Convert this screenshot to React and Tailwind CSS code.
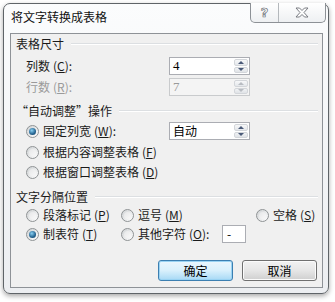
import React from "react";

const FONT = { fontFamily: '"Noto Sans CJK SC", "Noto Sans", sans-serif' };

function Key({ k }) {
  return (
    <span className="ml-[3px]">
      (<u>{k}</u>)
    </span>
  );
}

function GroupTitle({ children }) {
  return (
    <div className="flex items-center h-[20px] pl-[5px] pr-[4px]">
      <span className="text-[12px] leading-[16px] text-[#1a1a1a]">{children}</span>
      <div className="flex-1 ml-[7px] border-t border-t-[#dcdfe2] border-b border-b-white" />
    </div>
  );
}

function Radio({ checked }) {
  return (
    <span className="w-[13px] h-[13px] shrink-0 rounded-full border border-[#8f9395] bg-gradient-to-br from-[#cfd2d4] to-white flex items-center justify-center">
      {checked ? (
        <span className="w-[7px] h-[7px] rounded-full bg-[radial-gradient(circle_at_40%_35%,#8ad0f2,#23628f_60%,#173f5f)]" />
      ) : (
        <span className="w-[7px] h-[7px] rounded-full bg-gradient-to-br from-[#e6e7e8] to-[#f9f9f9]" />
      )}
    </span>
  );
}

function Arrow({ up, disabled }) {
  const c = disabled ? "border-b-[#b8bcc2]" : "border-b-[#4a5a78]";
  const d = disabled ? "border-t-[#b8bcc2]" : "border-t-[#4a5a78]";
  return up ? (
    <span className={`w-0 h-0 border-x-[3px] border-x-transparent border-b-[3px] ${c}`} />
  ) : (
    <span className={`w-0 h-0 border-x-[3px] border-x-transparent border-t-[3px] ${d}`} />
  );
}

function Spin({ value, disabled, serif }) {
  return (
    <div
      className={`w-[81px] h-[18px] flex border ${
        disabled ? "border-[#c9cbcd] bg-[#f4f4f4]" : "border-[#abadb3] bg-white"
      }`}
    >
      <span
        className={`flex-1 pl-[3px] text-[12px] leading-[16px] ${
          disabled ? "text-[#9a9a9a]" : "text-black"
        }`}
        style={serif ? { fontFamily: '"Liberation Serif", serif', fontSize: 13 } : undefined}
      >
        {value}
      </span>
      <div className="w-[14px] my-px mr-px flex flex-col gap-px">
        <div className="flex-1 rounded-[2px] border border-[#d3d6da] bg-gradient-to-b from-[#f7f8f9] to-[#e4e7eb] flex items-center justify-center">
          <Arrow up disabled={disabled} />
        </div>
        <div className="flex-1 rounded-[2px] border border-[#d3d6da] bg-gradient-to-b from-[#f0f2f4] to-[#e0e3e7] flex items-center justify-center">
          <Arrow disabled={disabled} />
        </div>
      </div>
    </div>
  );
}

function RadioLabel({ checked, children }) {
  return (
    <div className="flex items-center">
      <Radio checked={checked} />
      <span className="ml-[4px] text-[12px] leading-[16px] text-[#1a1a1a] whitespace-nowrap">
        {children}
      </span>
    </div>
  );
}

export default function App() {
  return (
    <div className="w-[335px] h-[302px] bg-white overflow-hidden relative" style={FONT}>
      <div className="ml-[3px] mt-[3px] w-[326px] h-[291px] rounded-[7px] border border-[#5f6468] bg-gradient-to-b from-[#fbfcfd] to-[#eceef1] shadow-[0_2px_5px_rgba(0,0,0,0.35)] flex flex-col pl-[6px] pr-[5px] pb-[5px]">
        {/* title bar */}
        <div className="h-[29px] flex items-start shrink-0">
          <span className="pl-px mt-[5px] text-[12px] leading-[16px] text-[#111]">
            将文字转换成表格
          </span>
          <div className="ml-auto -mt-px -mr-[3px] h-[20px] flex border border-t-0 border-[#8d9196] rounded-b-[5px] bg-gradient-to-b from-white to-[#eef0f2] overflow-hidden">
            <div className="w-[28px] flex items-center justify-center border-r border-r-[#b4b8bc]">
              <span
                className="text-[13px] leading-[16px] font-bold text-white [-webkit-text-stroke:0.7px_#6d7177]"
                style={{ fontFamily: '"DejaVu Sans", sans-serif' }}
              >
                ?
              </span>
            </div>
            <div className="w-[46px] flex items-center justify-center">
              <svg width="14" height="11" viewBox="0 0 14 11">
                <path
                  d="M1 1 H4.5 L7 3.5 L9.5 1 H13 L9 5.5 L13 10 H9.5 L7 7.5 L4.5 10 H1 L5 5.5 Z"
                  fill="#fdfdfd"
                  stroke="#6d7177"
                  strokeWidth="0.9"
                  strokeLinejoin="round"
                />
              </svg>
            </div>
          </div>
        </div>

        {/* client */}
        <div className="flex-1 border border-[#8e9297] bg-[#f0f0f0] flex flex-col">
          <GroupTitle>表格尺寸</GroupTitle>

          <div className="mt-[3px] h-[18px] flex items-center pl-[15px]">
            <span className="w-[143px] text-[12px] leading-[16px] text-[#1a1a1a]">
              列数<Key k="C" />:
            </span>
            <Spin value="4" serif />
          </div>
          <div className="mt-[3px] h-[18px] flex items-center pl-[15px]">
            <span className="w-[143px] text-[12px] leading-[16px] text-[#9a9a9a]">
              行数<Key k="R" />:
            </span>
            <Spin value="7" disabled serif />
          </div>

          <div className="mt-[5px]">
            <GroupTitle>“自动调整”操作</GroupTitle>
          </div>
          <div className="mt-px h-[18px] flex items-center pl-[15px]">
            <div className="w-[143px]">
              <RadioLabel checked>
                固定列宽<Key k="W" />:
              </RadioLabel>
            </div>
            <Spin value="自动" />
          </div>
          <div className="mt-[3px] h-[18px] flex items-center pl-[15px]">
            <RadioLabel>
              根据内容调整表格<Key k="F" />
            </RadioLabel>
          </div>
          <div className="mt-[2px] h-[18px] flex items-center pl-[15px]">
            <RadioLabel>
              根据窗口调整表格<Key k="D" />
            </RadioLabel>
          </div>

          <div className="mt-[8px] h-[16px] flex items-center">
            <div className="flex-1">
              <GroupTitle>文字分隔位置</GroupTitle>
            </div>
          </div>
          <div className="mt-px h-[18px] flex items-center pl-[15px]">
            <div className="w-[95px]">
              <RadioLabel>
                段落标记<Key k="P" />
              </RadioLabel>
            </div>
            <div className="w-[135px]">
              <RadioLabel>
                逗号<Key k="M" />
              </RadioLabel>
            </div>
            <RadioLabel>
              空格<Key k="S" />
            </RadioLabel>
          </div>
          <div className="mt-px h-[18px] flex items-center pl-[15px]">
            <div className="w-[95px]">
              <RadioLabel checked>
                制表符<Key k="T" />
              </RadioLabel>
            </div>
            <div className="w-[101px]">
              <RadioLabel>
                其他字符<Key k="O" />:
              </RadioLabel>
            </div>
            <div className="w-[24px] h-[18px] border border-[#abadb3] bg-white pl-[4px] text-[12px] leading-[15px]">
              -
            </div>
          </div>

          <div className="mt-[17px] h-[21px] flex justify-end gap-[9px] pr-[5px]">
            <button className="w-[75px] h-[21px] rounded-[3px] border border-[#3c7fb1] bg-gradient-to-b from-[#eaf6fd] via-[#d9f0fc] to-[#a7d9f5] shadow-[inset_0_0_0_1px_#9ad3f3] text-[12px] leading-[16px] text-black">
              确定
            </button>
            <button className="w-[75px] h-[21px] rounded-[3px] border border-[#707070] bg-gradient-to-b from-[#f2f2f2] via-[#e6e6e6] to-[#cfcfcf] shadow-[inset_0_0_0_1px_#fbfbfb] text-[12px] leading-[16px] text-black">
              取消
            </button>
          </div>
        </div>
      </div>
    </div>
  );
}
